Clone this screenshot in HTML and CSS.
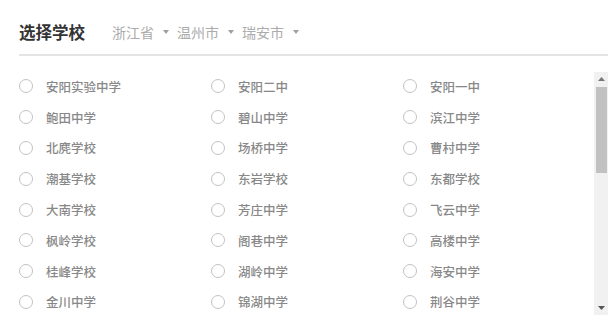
FILE: index.html
```html
<!DOCTYPE html>
<html lang="zh-CN">

<head>
  <meta charset="UTF-8" />
  <meta name="viewport" content="width=device-width, initial-scale=1.0" />
  <link rel="stylesheet" href="styles.css">
</head>

<body>
  <div class="panel">
    <div class="header">
      <span class="title">选择学校</span>
      <div class="areas">
        <span class="area">浙江省<i class="caret"></i></span>
        <span class="area">温州市<i class="caret"></i></span>
        <span class="area">瑞安市<i class="caret"></i></span>
      </div>
    </div>

    <div class="body">
      <ul class="schools">
        <li><span class="radio"></span>安阳实验中学</li>
        <li><span class="radio"></span>安阳二中</li>
        <li><span class="radio"></span>安阳一中</li>
        <li><span class="radio"></span>鲍田中学</li>
        <li><span class="radio"></span>碧山中学</li>
        <li><span class="radio"></span>滨江中学</li>
        <li><span class="radio"></span>北麂学校</li>
        <li><span class="radio"></span>场桥中学</li>
        <li><span class="radio"></span>曹村中学</li>
        <li><span class="radio"></span>潮基学校</li>
        <li><span class="radio"></span>东岩学校</li>
        <li><span class="radio"></span>东都学校</li>
        <li><span class="radio"></span>大南学校</li>
        <li><span class="radio"></span>芳庄中学</li>
        <li><span class="radio"></span>飞云中学</li>
        <li><span class="radio"></span>枫岭学校</li>
        <li><span class="radio"></span>阁巷中学</li>
        <li><span class="radio"></span>高楼中学</li>
        <li><span class="radio"></span>桂峰学校</li>
        <li><span class="radio"></span>湖岭中学</li>
        <li><span class="radio"></span>海安中学</li>
        <li><span class="radio"></span>金川中学</li>
        <li><span class="radio"></span>锦湖中学</li>
        <li><span class="radio"></span>荆谷中学</li>
      </ul>

      <div class="scrollbar">
        <div class="sb-btn">
          <svg width="7" height="4" viewBox="0 0 7 4"><path d="M0 4 L3.5 0 L7 4 Z" fill="#777" /></svg>
        </div>
        <div class="sb-track">
          <div class="sb-thumb"></div>
        </div>
        <div class="sb-btn">
          <svg width="7" height="4" viewBox="0 0 7 4"><path d="M0 0 L7 0 L3.5 4 Z" fill="#555" /></svg>
        </div>
      </div>
    </div>
  </div>
</body>

</html>
```

FILE: styles.css
```css
html,
body {
  margin: 0;
  background: #fff;
}

body {
  font-family: "Noto Sans CJK SC", "Noto Sans", sans-serif;
  width: 608px;
  height: 336px;
  overflow: hidden;
}

.panel {
  padding-left: 19px;
}

.header {
  display: flex;
  align-items: center;
  height: 56px;
  padding-top: 10px;
  border-bottom: 2px solid #e4e4e4;
  box-sizing: border-box;
}

.header .title {
  color: #333;
  font-size: 16.5px;
  font-weight: 700;
  line-height: 20px;
}

.areas {
  display: flex;
  margin-left: 27px;
}

.area {
  display: flex;
  align-items: center;
  color: #ababab;
  font-size: 14px;
  line-height: 18px;
  margin-right: 8px;
}

.area .caret {
  width: 0;
  height: 0;
  margin-left: 9px;
  border-left: 3px solid transparent;
  border-right: 3px solid transparent;
  border-top: 4px solid #a0a0a0;
}

.body {
  display: flex;
  margin-top: 15px;
}

.schools {
  list-style: none;
  margin: 0;
  padding: 0;
  flex: 1;
  display: grid;
  grid-template-columns: 192px 192px 1fr;
  grid-auto-rows: 30.8px;
  height: 250px;
  overflow: hidden;
}

.schools li {
  display: flex;
  align-items: center;
  color: #888;
  font-size: 12.5px;
  font-weight: 500;
}

.radio {
  width: 12px;
  height: 12px;
  border: 1.8px solid #c2c2c2;
  border-radius: 50%;
  margin-right: 13px;
  flex-shrink: 0;
}

.scrollbar {
  width: 14px;
  height: 243px;
  margin-top: 1px;
  background: #f1f1f1;
  display: flex;
  flex-direction: column;
}

.sb-btn {
  height: 14px;
  display: flex;
  align-items: center;
  justify-content: center;
}

.sb-track {
  flex: 1;
}

.sb-thumb {
  margin: 1px 1px 0 2px;
  height: 86px;
  background: #c1c1c1;
}
```
